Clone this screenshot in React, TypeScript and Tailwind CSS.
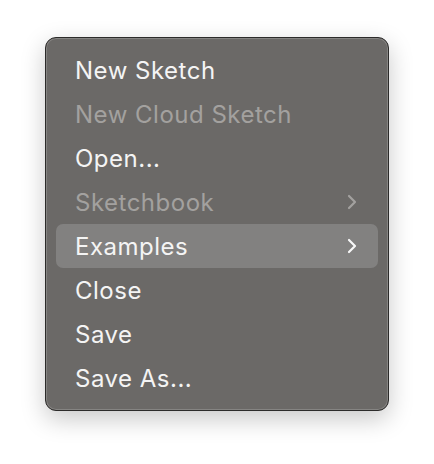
const items: { label: string; disabled?: boolean; submenu?: boolean; active?: boolean }[] = [
  { label: "New Sketch" },
  { label: "New Cloud Sketch", disabled: true },
  { label: "Open..." },
  { label: "Sketchbook", disabled: true, submenu: true },
  { label: "Examples", submenu: true, active: true },
  { label: "Close" },
  { label: "Save" },
  { label: "Save As..." },
];

function Chevron({ className }: { className: string }) {
  return (
    <svg width="10" height="16" viewBox="0 0 10 16" fill="none" className={className}>
      <path d="M2 2l6 6-6 6" stroke="currentColor" strokeWidth="2.2" strokeLinecap="round" strokeLinejoin="round" />
    </svg>
  );
}

export default function App() {
  return (
    <div className="h-[464px] w-[434px] bg-white pl-[45px] pt-[37px]">
      <div className="w-[344px] rounded-[11px] border border-[#2c2b2a] bg-[#6b6967] px-[10px] py-[10px] shadow-[inset_0_0_0_1px_rgba(255,255,255,0.18),0_8px_24px_rgba(0,0,0,0.22)]">
        {items.map((item) => (
          <div
            key={item.label}
            className={
              item.active
                ? "flex h-[44px] items-center justify-between rounded-[7px] bg-[#828180] pl-[19px] pr-[21px]"
                : "flex h-[44px] items-center justify-between rounded-[7px] pl-[19px] pr-[21px]"
            }
          >
            <span
              className={
                item.disabled
                  ? "pt-[2px] font-['Inter',sans-serif] text-[24px] leading-none tracking-[0.5px] text-[#a3a19f]"
                  : "pt-[2px] font-['Inter',sans-serif] text-[24px] leading-none tracking-[0.5px] text-[#f4f4f4]"
              }
            >
              {item.label}
            </span>
            {item.submenu ? (
              <Chevron className={item.disabled ? "text-[#a3a19f]" : "text-[#f8f8f8]"} />
            ) : null}
          </div>
        ))}
      </div>
    </div>
  );
}
